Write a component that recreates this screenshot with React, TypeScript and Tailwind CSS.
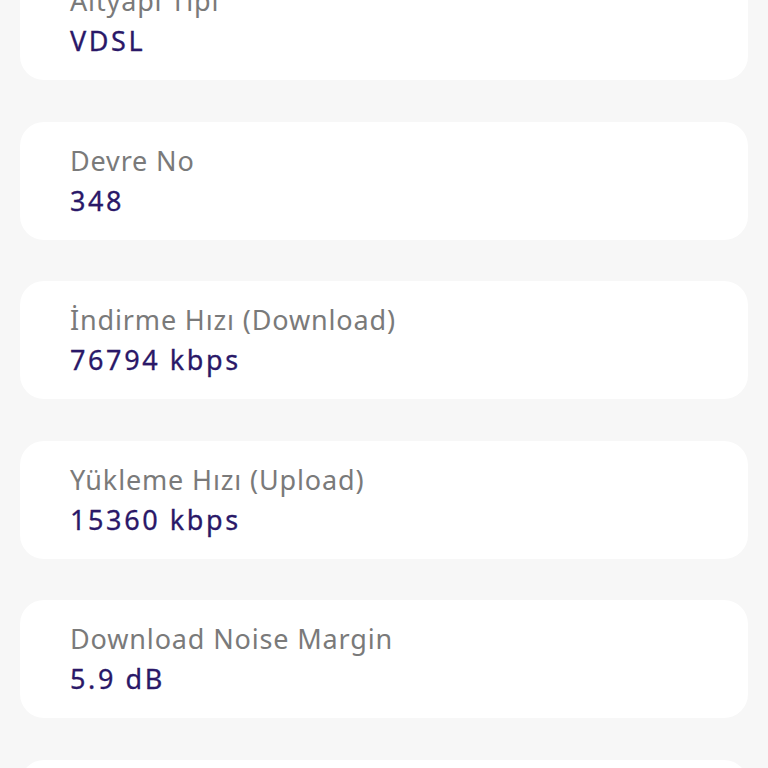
const rows = [
  { label: 'Altyapı Tipi', value: 'VDSL' },
  { label: 'Devre No', value: '348' },
  { label: 'İndirme Hızı (Download)', value: '76794 kbps' },
  { label: 'Yükleme Hızı (Upload)', value: '15360 kbps' },
  { label: 'Download Noise Margin', value: '5.9 dB' },
  { label: 'Upload Noise Margin', value: '8.1 dB' },
];

export default function App() {
  return (
    <div className="h-[768px] overflow-hidden bg-[#f7f7f7] px-5 font-['Noto_Sans',sans-serif]">
      <div className="-mt-[38px] flex flex-col gap-[41.5px]">
        {rows.map((row) => (
          <div key={row.label} className="h-[118px] rounded-[24px] bg-white px-[50px] pt-[19px]">
            <div className="text-[27px] leading-[40px] tracking-[0.85px] text-[#7a7a7a]">{row.label}</div>
            <div className="text-[27px] leading-[40px] tracking-[2.6px] text-[#2a1868] [-webkit-text-stroke:0.3px_#2a1868]">
              {row.value}
            </div>
          </div>
        ))}
      </div>
    </div>
  );
}
